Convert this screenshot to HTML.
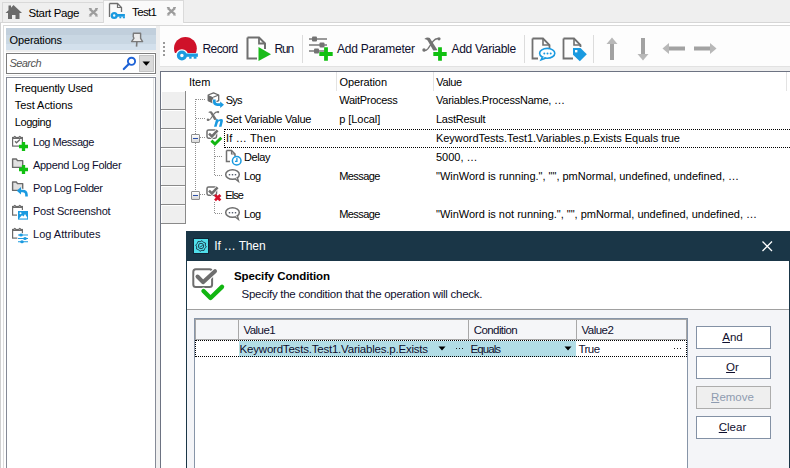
<!DOCTYPE html>
<html><head><meta charset="utf-8">
<style>
*{margin:0;padding:0;box-sizing:border-box}
html,body{width:790px;height:468px;overflow:hidden;background:#efefef;font-family:"Liberation Sans",sans-serif;color:#000;position:relative}
.a{position:absolute}
.t{position:absolute;white-space:nowrap;line-height:1}
svg{position:absolute;overflow:visible}
u{text-decoration:underline;text-underline-offset:1px}
</style></head><body>
<div class="a" style="left:0px;top:0px;width:790px;height:22px;background:#efefef"></div>
<div class="a" style="left:0px;top:22px;width:790px;height:1px;background:#d6d6d6"></div>
<div class="a" style="left:2px;top:2px;width:102px;height:20px;background:#efefef;border:1px solid #d9d9d9;border-bottom:none"></div>
<div class="a" style="left:103px;top:0px;width:81px;height:23px;background:#fafafa;border:1px solid #dadada;border-bottom:none"></div>
<svg style="left:5px;top:4px" width="18" height="16" viewBox="0 0 18 16"><path d="M8.5 1 L17 9 L14.5 9 L14.5 15 L10.5 15 L10.5 11 L7 11 L7 15 L3 15 L3 9 L0.5 9 L3.5 6.2 L3.5 1.5 L6 1.5 L6 3.8 Z" fill="#6b6b6b"/></svg>
<div class="t" style="left:28.5px;top:7.77px;font-size:11.5px;color:#000;letter-spacing:-0.371px;">Start Page</div>
<svg style="left:87.5px;top:6.8px" width="11" height="11" viewBox="0 0 11 11"><path d="M1.8 2.2 L9 8.4 M9 2.2 L1.8 8.4" stroke="#9c9c9c" stroke-width="2.3"/><path d="M0.9 1.6 H3.6 M7.2 1.6 H9.9 M0.9 9 H3.6 M7.2 9 H9.9" stroke="#9c9c9c" stroke-width="1.2"/></svg>
<svg style="left:108px;top:2px" width="18" height="17" viewBox="0 0 18 17"><path d="M1.5 1.5 H9.5 L13.5 5.5 V10" fill="none" stroke="#6f6f6f" stroke-width="1.3"/><path d="M1.5 1.5 V15" fill="none" stroke="#6f6f6f" stroke-width="1.3"/><path d="M9.5 1.5 V5.5 H13.5" fill="none" stroke="#6f6f6f" stroke-width="1.2"/><circle cx="6.2" cy="13.5" r="3.6" fill="#fafafa"/><circle cx="6.2" cy="13.5" r="2.4" fill="none" stroke="#1a9ae0" stroke-width="2.4"/><rect x="8.5" y="12" width="8.4" height="2.7" fill="#1a9ae0"/><rect x="11.4" y="14.5" width="1.9" height="1.8" fill="#1a9ae0"/><rect x="14.8" y="14.5" width="2.1" height="1.8" fill="#1a9ae0"/></svg>
<div class="t" style="left:132px;top:7.27px;font-size:11.5px;color:#000;letter-spacing:-0.622px;">Test1</div>
<svg style="left:166px;top:5.5px" width="11" height="11" viewBox="0 0 11 11"><path d="M1.8 2.2 L9 8.4 M9 2.2 L1.8 8.4" stroke="#9c9c9c" stroke-width="2.3"/><path d="M0.9 1.6 H3.6 M7.2 1.6 H9.9 M0.9 9 H3.6 M7.2 9 H9.9" stroke="#9c9c9c" stroke-width="1.2"/></svg>
<div class="a" style="left:0px;top:23px;width:790px;height:445px;background:#fff;border-left:1px solid #d0d0d0"></div>
<div class="a" style="left:3px;top:25px;width:787px;height:443px;border-left:1px solid #dcdcdc;border-top:1px solid #d8d8d8"></div>
<div class="a" style="left:104px;top:22px;width:79px;height:3px;background:#fafafa"></div>
<div class="a" style="left:6px;top:28px;width:150px;height:22px;background:linear-gradient(#c1cfdc 0,#c1cfdc 7px,#c9d7e3 7px,#c9d7e3 16px,#d3e0ec 16px)"></div>
<div class="a" style="left:6px;top:50px;width:150px;height:2px;background:#eeeeee"></div>
<div class="t" style="left:9.5px;top:34.89px;font-size:11px;color:#000;letter-spacing:-0.134px;">Operations</div>
<svg style="left:126px;top:28.7px" width="24" height="22" viewBox="0 0 24 22"><path d="M7.4 4.3 H14.6 V9.3 L16.6 12.6 H5.6 L7.9 9.3 L7.2 7.6 Z" fill="#ececec" stroke="#7a7a7a" stroke-width="1.4" stroke-linejoin="round"/><path d="M10.9 12.8 L10.5 17.6" stroke="#7a7a7a" stroke-width="1.6"/></svg>
<div class="a" style="left:6px;top:53px;width:150px;height:21px;border:1px solid #7d7d7d;background:#fff"></div>
<div class="t" style="left:9.5px;top:57.59px;font-size:11px;color:#555555;letter-spacing:-0.571px;font-style:italic;">Search</div>
<svg style="left:122px;top:56px" width="14" height="15" viewBox="0 0 14 15"><circle cx="9.5" cy="5.3" r="3.6" fill="none" stroke="#1f63d6" stroke-width="1.9"/><path d="M6.8 8 L1.8 13" stroke="#1f63d6" stroke-width="2.2" stroke-linecap="round"/></svg>
<div class="a" style="left:139px;top:55px;width:15px;height:17px;background:#dadada;border:1px solid #c4c4c4"></div>
<svg style="left:142px;top:61px" width="9" height="5" viewBox="0 0 9 5"><path d="M0.5 0.5 H8 L4.25 4.8 Z" fill="#000"/></svg>
<div class="a" style="left:6px;top:77px;width:150px;height:400px;border:1px solid #858a96;background:#fff"></div>
<div class="a" style="left:153px;top:78px;width:1px;height:52px;background:#e2e2e2"></div>
<div class="a" style="left:6px;top:75px;width:150px;height:1px;background:#ebebeb"></div>
<div class="t" style="left:14.8px;top:83.19px;font-size:11px;color:#000;letter-spacing:-0.193px;">Frequently Used</div>
<div class="t" style="left:14.8px;top:100.19px;font-size:11px;color:#000;letter-spacing:-0.063px;">Test Actions</div>
<div class="t" style="left:14.8px;top:117.19px;font-size:11px;color:#000;letter-spacing:-0.442px;">Logging</div>
<div class="t" style="left:33px;top:137.19px;font-size:11px;color:#0f0f2e;letter-spacing:-0.474px;">Log Message</div>
<div class="t" style="left:33px;top:159.69px;font-size:11px;color:#0f0f2e;letter-spacing:-0.311px;">Append Log Folder</div>
<div class="t" style="left:33px;top:182.69px;font-size:11px;color:#0f0f2e;letter-spacing:-0.401px;">Pop Log Folder</div>
<div class="t" style="left:33px;top:205.69px;font-size:11px;color:#0f0f2e;letter-spacing:-0.222px;">Post Screenshot</div>
<div class="t" style="left:33px;top:228.69px;font-size:11px;color:#0f0f2e;letter-spacing:0.018px;">Log Attributes</div>
<svg style="left:8px;top:132px" width="24" height="24" viewBox="0 0 24 24"><g transform="translate(4,3.5)"><rect x="0.6" y="2" width="9.8" height="8.6" fill="#fff" stroke="#6b6b6b" stroke-width="1.2"/><path d="M0.6 2.6 H10.4" stroke="#6b6b6b" stroke-width="1.8"/><path d="M1.8 2.2 Q2.8 -0.3 3.8 2.2 M6.8 2.2 Q7.8 -0.3 8.8 2.2" fill="#fff" stroke="#6b6b6b" stroke-width="1.2"/></g><path d="M7 9.3 L8.5 10.8 L12 7.5" fill="none" stroke="#6b6b6b" stroke-width="1.3"/><path d="M15.5 10 V19 M11 14.5 H20" stroke="#11c011" stroke-width="3.3"/></svg>
<svg style="left:8px;top:155px" width="24" height="24" viewBox="0 0 24 24"><path d="M4.6 4 H8.3 L9.5 5.6 H14.7 V12.4 H4.6 Z" fill="#e1e1e1" stroke="#6b6b6b" stroke-width="1.4" stroke-linejoin="round"/><path d="M15.5 10 V19 M11 14.5 H20" stroke="#11c011" stroke-width="3.3"/></svg>
<svg style="left:8px;top:178px" width="24" height="24" viewBox="0 0 24 24"><path d="M4.6 4 H8.3 L9.5 5.6 H14.7 V12.4 H4.6 Z" fill="#e1e1e1" stroke="#6b6b6b" stroke-width="1.4" stroke-linejoin="round"/><path d="M12.2 13 H14.5 Q18.5 13 18.5 17 V18.5" fill="none" stroke="#fff" stroke-width="4.4"/><path d="M12.2 13 H14.5 Q18.5 13 18.5 17 V18.5" fill="none" stroke="#1a9ae0" stroke-width="2.6"/><path d="M8.8 12.8 L13 9 V16.6 Z" fill="#1a9ae0"/></svg>
<svg style="left:8px;top:201px" width="24" height="24" viewBox="0 0 24 24"><g transform="translate(4,3.5)"><rect x="0.6" y="2" width="9.8" height="8.6" fill="#fff" stroke="#6b6b6b" stroke-width="1.2"/><path d="M0.6 2.6 H10.4" stroke="#6b6b6b" stroke-width="1.8"/><path d="M1.8 2.2 Q2.8 -0.3 3.8 2.2 M6.8 2.2 Q7.8 -0.3 8.8 2.2" fill="#fff" stroke="#6b6b6b" stroke-width="1.2"/></g><rect x="9" y="9" width="12" height="10.6" fill="#fff"/><rect x="10" y="10" width="10" height="8.6" fill="#1a9ae0"/><path d="M11 17.6 L14 14.2 L15.5 15.5 L17 13 L19.2 16.5 V17.6 Z" fill="#fff"/><circle cx="12.5" cy="12.3" r="1" fill="#fff"/></svg>
<svg style="left:8px;top:224px" width="24" height="24" viewBox="0 0 24 24"><g transform="translate(4,3.5)"><rect x="0.6" y="2" width="9.8" height="8.6" fill="#fff" stroke="#6b6b6b" stroke-width="1.2"/><path d="M0.6 2.6 H10.4" stroke="#6b6b6b" stroke-width="1.8"/><path d="M1.8 2.2 Q2.8 -0.3 3.8 2.2 M6.8 2.2 Q7.8 -0.3 8.8 2.2" fill="#fff" stroke="#6b6b6b" stroke-width="1.2"/></g><rect x="9.3" y="9.2" width="12" height="10" fill="#fff"/><path d="M10 11 H20 M10 14.5 H20 M10 17.7 H20" stroke="#1a9ae0" stroke-width="1.1"/><ellipse cx="13" cy="11" rx="1.8" ry="1.5" fill="#1a9ae0"/><ellipse cx="17" cy="14.5" rx="1.8" ry="1.5" fill="#1a9ae0"/><ellipse cx="14" cy="17.7" rx="1.8" ry="1.5" fill="#1a9ae0"/></svg>
<div class="a" style="left:156px;top:26px;width:4px;height:442px;background:#efefef"></div>
<div class="a" style="left:160px;top:26px;width:630px;height:40px;background:#fdfdfd"></div>
<div class="a" style="left:160px;top:66px;width:630px;height:5px;background:#efefef"></div>
<div class="a" style="left:160px;top:66px;width:630px;height:1px;background:#e2e2e2"></div>
<div class="a" style="left:163px;top:42px;width:2px;height:2px;background:#9a9a9a"></div>
<div class="a" style="left:163px;top:46px;width:2px;height:2px;background:#9a9a9a"></div>
<div class="a" style="left:163px;top:50px;width:2px;height:2px;background:#9a9a9a"></div>
<div class="a" style="left:163px;top:54px;width:2px;height:2px;background:#9a9a9a"></div>
<svg style="left:172px;top:35px" width="28" height="28" viewBox="0 0 28 28"><defs><clipPath id="rc"><rect x="0" y="0" width="28" height="17.9"/></clipPath></defs><circle cx="13.4" cy="13.3" r="11.4" fill="#cf1129" clip-path="url(#rc)"/><circle cx="9.9" cy="20.5" r="6.3" fill="#fdfdfd"/><circle cx="9.9" cy="20.5" r="3.4" fill="none" stroke="#1b9be0" stroke-width="3.3"/><rect x="13" y="18.5" width="12.9" height="3.3" fill="#1b9be0"/><rect x="17.2" y="21.5" width="2.4" height="2.2" fill="#1b9be0"/><rect x="21.7" y="21.5" width="2.8" height="2.2" fill="#1b9be0"/></svg>
<div class="t" style="left:202.5px;top:43.24px;font-size:12px;color:#0f0f2e;letter-spacing:-0.597px;">Record</div>
<svg style="left:245.5px;top:36px" width="28" height="27" viewBox="0 0 28 27"><path d="M1.5 1.5 H13 L19 7.5 V13 M1.5 1.5 V22.5 H11" fill="none" stroke="#6f6f6f" stroke-width="2"/><path d="M13 1.5 V7.5 H19" fill="none" stroke="#6f6f6f" stroke-width="1.8"/><path d="M12.5 11 L25 18.2 L12.5 25 Z" fill="#19bb19"/></svg>
<div class="t" style="left:274.5px;top:43.24px;font-size:12px;color:#0f0f2e;letter-spacing:-1.157px;">Run</div>
<div class="a" style="left:302px;top:35px;width:1px;height:28px;background:#dcdcdc"></div>
<svg style="left:308px;top:34px" width="22" height="24" viewBox="0 0 22 24"><path d="M1 5 H19 M1 11 H19 M1 17 H19" stroke="#7a7a7a" stroke-width="1.5"/><rect x="4" y="2.5" width="5" height="5" rx="1" fill="#737373"/><rect x="11.5" y="8.5" width="5" height="5" rx="1" fill="#737373"/><rect x="6" y="14.5" width="5" height="5" rx="1" fill="#737373"/></svg>
<svg style="left:316px;top:44px" width="20" height="20" viewBox="0 0 20 20"><path d="M10 3.3 V16.7 M3.3 10 H16.7" stroke="#11c011" stroke-width="3.8"/></svg>
<div class="t" style="left:337px;top:43.24px;font-size:12px;color:#0f0f2e;letter-spacing:-0.226px;">Add Parameter</div>
<svg style="left:420px;top:34px" width="25" height="28" viewBox="0 0 25 28"><path d="M4.3 4.9 Q7.2 2.8 9.8 4 L17.6 16.2 L13.3 16.6 L7.6 6.6 Q6.6 5.2 4.3 4.9 Z" fill="#737373"/><path d="M3.5 16.2 Q5.5 17.6 8 14.6 L13 7.4 Q15.5 4.2 18.5 4.6" fill="none" stroke="#737373" stroke-width="1.4"/><circle cx="4" cy="16" r="1.7" fill="#737373"/><circle cx="19" cy="4.8" r="1.6" fill="#737373"/></svg>
<svg style="left:430px;top:44px" width="20" height="20" viewBox="0 0 20 20"><path d="M10 3.3 V16.7 M3.3 10 H16.7" stroke="#11c011" stroke-width="3.8"/></svg>
<div class="t" style="left:451.5px;top:43.24px;font-size:12px;color:#0f0f2e;letter-spacing:-0.293px;">Add Variable</div>
<div class="a" style="left:524px;top:35px;width:1px;height:28px;background:#dcdcdc"></div>
<svg style="left:530.5px;top:36.5px" width="24" height="26" viewBox="0 0 24 26"><path d="M1.5 1.5 H12 L18.5 8 V11 M1.5 1.5 V21.5 H7" fill="none" stroke="#707070" stroke-width="1.8"/><path d="M12 1.5 V8 H18.5" fill="none" stroke="#707070" stroke-width="1.6"/><ellipse cx="16.2" cy="16.3" rx="7.6" ry="4.9" fill="#fff" stroke="#1a9ae0" stroke-width="1.6"/><path d="M11.5 20.2 L10 23 L15 21" fill="#fff" stroke="#1a9ae0" stroke-width="1.4"/><circle cx="13.3" cy="16.5" r="1" fill="#1a9ae0"/><circle cx="16.5" cy="16.5" r="1" fill="#1a9ae0"/><circle cx="19.7" cy="16.5" r="1" fill="#1a9ae0"/></svg>
<svg style="left:561.5px;top:36.5px" width="26" height="26" viewBox="0 0 26 26"><path d="M1.5 1.5 H12 L18.5 8 V10 M1.5 1.5 V21.5 H11" fill="none" stroke="#707070" stroke-width="1.8"/><path d="M12 1.5 V8 H18.5" fill="none" stroke="#707070" stroke-width="1.6"/><path d="M11 11 H18.5 L24.8 17.3 L17.8 24.3 L11 17.8 Z" fill="#1a9ae0"/><rect x="13" y="13" width="2.4" height="2.4" fill="#fff"/></svg>
<div class="a" style="left:593px;top:35px;width:1px;height:28px;background:#dcdcdc"></div>
<svg style="left:605px;top:37px" width="14" height="24" viewBox="0 0 14 24"><path d="M7 0.5 L12.5 7 H1.5 Z" fill="#b8b8b8"/><rect x="5" y="7" width="4" height="16" fill="#a2a2a2"/></svg>
<svg style="left:636px;top:37px" width="14" height="24" viewBox="0 0 14 24"><rect x="5" y="1" width="4" height="16" fill="#a2a2a2"/><path d="M7 23.5 L12.5 17 H1.5 Z" fill="#b8b8b8"/></svg>
<svg style="left:662px;top:42px" width="24" height="13" viewBox="0 0 24 13"><path d="M0.5 6.5 L7 1 V12 Z" fill="#b8b8b8"/><rect x="7" y="4.5" width="16" height="4" fill="#a2a2a2"/></svg>
<svg style="left:693px;top:42px" width="24" height="13" viewBox="0 0 24 13"><rect x="1" y="4.5" width="16" height="4" fill="#a2a2a2"/><path d="M23.5 6.5 L17 1 V12 Z" fill="#b8b8b8"/></svg>
<div class="a" style="left:160px;top:71px;width:630px;height:397px;border-left:1px solid #6d7382;border-top:1px solid #6d7382;background:#fff"></div>
<div class="a" style="left:336px;top:72px;width:1px;height:19px;background:#e3e3e3"></div>
<div class="a" style="left:433px;top:72px;width:1px;height:19px;background:#e3e3e3"></div>
<div class="a" style="left:786px;top:72px;width:1px;height:19px;background:#e3e3e3"></div>
<div class="t" style="left:189px;top:76.99px;font-size:11px;color:#000;letter-spacing:0.002px;">Item</div>
<div class="t" style="left:339.5px;top:76.99px;font-size:11px;color:#000;letter-spacing:-0.101px;">Operation</div>
<div class="t" style="left:436.3px;top:76.99px;font-size:11px;color:#000;letter-spacing:-0.404px;">Value</div>
<div class="a" style="left:185px;top:91px;width:1px;height:133px;background:#8a8a8a"></div>
<div class="a" style="left:162px;top:92px;width:23px;height:17px;background:#efefef"></div>
<div class="a" style="left:161px;top:109px;width:24px;height:1px;background:#8a8a8a"></div>
<div class="a" style="left:162px;top:111px;width:23px;height:17px;background:#efefef"></div>
<div class="a" style="left:161px;top:128px;width:24px;height:1px;background:#8a8a8a"></div>
<div class="a" style="left:162px;top:130px;width:23px;height:17px;background:#efefef"></div>
<div class="a" style="left:161px;top:147px;width:24px;height:1px;background:#8a8a8a"></div>
<div class="a" style="left:162px;top:149px;width:23px;height:17px;background:#efefef"></div>
<div class="a" style="left:161px;top:166px;width:24px;height:1px;background:#8a8a8a"></div>
<div class="a" style="left:162px;top:168px;width:23px;height:17px;background:#efefef"></div>
<div class="a" style="left:161px;top:185px;width:24px;height:1px;background:#8a8a8a"></div>
<div class="a" style="left:162px;top:187px;width:23px;height:17px;background:#efefef"></div>
<div class="a" style="left:161px;top:204px;width:24px;height:1px;background:#8a8a8a"></div>
<div class="a" style="left:162px;top:206px;width:23px;height:17px;background:#efefef"></div>
<div class="a" style="left:161px;top:223px;width:24px;height:1px;background:#8a8a8a"></div>
<div class="t" style="left:225.7px;top:94.89px;font-size:11px;color:#000;letter-spacing:-0.819px;">Sys</div>
<div class="t" style="left:339.3px;top:94.89px;font-size:11px;color:#000;letter-spacing:-0.283px;">WaitProcess</div>
<div class="t" style="left:436px;top:94.89px;font-size:11px;color:#000;letter-spacing:-0.230px;">Variables.ProcessName, …</div>
<div class="t" style="left:225.7px;top:113.89px;font-size:11px;color:#000;letter-spacing:-0.217px;">Set Variable Value</div>
<div class="t" style="left:339.3px;top:113.89px;font-size:11px;color:#000;letter-spacing:-0.073px;">p [Local]</div>
<div class="t" style="left:436px;top:113.89px;font-size:11px;color:#000;letter-spacing:-0.263px;">LastResult</div>
<div class="t" style="left:226px;top:132.89px;font-size:11px;color:#000;letter-spacing:0.188px;">If … Then</div>
<div class="t" style="left:436px;top:132.89px;font-size:11px;color:#000;letter-spacing:-0.046px;">KeywordTests.Test1.Variables.p.Exists Equals true</div>
<div class="t" style="left:244px;top:151.89px;font-size:11px;color:#000;letter-spacing:-0.406px;">Delay</div>
<div class="t" style="left:436px;top:151.89px;font-size:11px;color:#000;letter-spacing:-0.014px;">5000, …</div>
<div class="t" style="left:244px;top:170.89px;font-size:11px;color:#000;letter-spacing:-0.677px;">Log</div>
<div class="t" style="left:339.3px;top:170.89px;font-size:11px;color:#000;letter-spacing:-0.606px;">Message</div>
<div class="t" style="left:436px;top:170.89px;font-size:11px;color:#000;letter-spacing:-0.007px;">&quot;WinWord is running.&quot;, &quot;&quot;, pmNormal, undefined, undefined, …</div>
<div class="t" style="left:225.3px;top:189.89px;font-size:11px;color:#000;letter-spacing:-0.966px;">Else</div>
<div class="t" style="left:244px;top:208.89px;font-size:11px;color:#000;letter-spacing:-0.677px;">Log</div>
<div class="t" style="left:339.3px;top:208.89px;font-size:11px;color:#000;letter-spacing:-0.606px;">Message</div>
<div class="t" style="left:436px;top:208.89px;font-size:11px;color:#000;letter-spacing:-0.012px;">&quot;WinWord is not running.&quot;, &quot;&quot;, pmNormal, undefined, undefined, …</div>
<div class="a" style="left:224px;top:129px;width:570px;height:19px;border:1px dotted #000"></div>
<div class="a" style="left:195px;top:99px;width:1px;height:35px;background:repeating-linear-gradient(#8f8f8f 0 1px,transparent 1px 2px)"></div>
<div class="a" style="left:196px;top:99px;width:9px;height:1px;background:repeating-linear-gradient(90deg,#8f8f8f 0 1px,transparent 1px 2px)"></div>
<div class="a" style="left:196px;top:118px;width:9px;height:1px;background:repeating-linear-gradient(90deg,#8f8f8f 0 1px,transparent 1px 2px)"></div>
<div class="a" style="left:200px;top:137px;width:5px;height:1px;background:repeating-linear-gradient(90deg,#8f8f8f 0 1px,transparent 1px 2px)"></div>
<div class="a" style="left:195px;top:143px;width:1px;height:48px;background:repeating-linear-gradient(#8f8f8f 0 1px,transparent 1px 2px)"></div>
<div class="a" style="left:200px;top:194px;width:5px;height:1px;background:repeating-linear-gradient(90deg,#8f8f8f 0 1px,transparent 1px 2px)"></div>
<div class="a" style="left:214px;top:146px;width:1px;height:30px;background:repeating-linear-gradient(#8f8f8f 0 1px,transparent 1px 2px)"></div>
<div class="a" style="left:215px;top:156px;width:8px;height:1px;background:repeating-linear-gradient(90deg,#8f8f8f 0 1px,transparent 1px 2px)"></div>
<div class="a" style="left:215px;top:175px;width:8px;height:1px;background:repeating-linear-gradient(90deg,#8f8f8f 0 1px,transparent 1px 2px)"></div>
<div class="a" style="left:214px;top:202px;width:1px;height:12px;background:repeating-linear-gradient(#8f8f8f 0 1px,transparent 1px 2px)"></div>
<div class="a" style="left:215px;top:213px;width:8px;height:1px;background:repeating-linear-gradient(90deg,#8f8f8f 0 1px,transparent 1px 2px)"></div>
<div class="a" style="left:191px;top:134px;width:9px;height:9px;border:1px solid #8e8f8f;border-radius:1px;background:linear-gradient(#ffffff,#d8d8d8)"></div>
<div class="a" style="left:193px;top:138px;width:5px;height:1px;background:#2a4fa8"></div>
<div class="a" style="left:191px;top:191px;width:9px;height:9px;border:1px solid #8e8f8f;border-radius:1px;background:linear-gradient(#ffffff,#d8d8d8)"></div>
<div class="a" style="left:193px;top:195px;width:5px;height:1px;background:#2a4fa8"></div>
<svg style="left:204px;top:90px" width="24" height="24" viewBox="0 0 24 24"><path d="M4.2 5 L9.5 2.9 L14.7 5 V10.6 L9.2 12.8 L4.2 10.6 Z" fill="#fff" stroke="#6a6a6a" stroke-width="1.3" stroke-linejoin="round"/><path d="M4.2 5 L9.2 7.2 V12.8 L4.2 10.6 Z" fill="#6a6a6a"/><path d="M9.2 7.2 L14.7 5" stroke="#6a6a6a" stroke-width="1.1"/><path d="M10.3 9.6 V11.6 Q10.3 14.6 13.3 14.6 H16.8" fill="none" stroke="#fff" stroke-width="4.2"/><path d="M10.3 9.6 V11.6 Q10.3 14.6 13.3 14.6 H16.8" fill="none" stroke="#1a9ae0" stroke-width="2.7"/><path d="M16.2 11.6 L20 14.7 L16.2 17.9 Z" fill="#1a9ae0"/></svg>
<svg style="left:204px;top:109px" width="24" height="24" viewBox="0 0 24 24"><g transform="translate(1.2,-0.2) scale(0.68)"><path d="M4.3 4.9 Q7.2 2.8 9.8 4 L17.6 16.2 L13.3 16.6 L7.6 6.6 Q6.6 5.2 4.3 4.9 Z" fill="#737373"/><path d="M3.5 16.2 Q5.5 17.6 8 14.6 L13 7.4 Q15.5 4.2 18.5 4.6" fill="none" stroke="#737373" stroke-width="1.6"/><circle cx="4" cy="16" r="1.8" fill="#737373"/><circle cx="19" cy="4.8" r="1.7" fill="#737373"/></g><path d="M10 17.7 L12.1 10.3 H14.5 L14.2 11.5 Q15.6 10.1 17.4 10.1 Q19.4 10.2 18.9 12.3 L17.5 17.7 H15 L16.2 12.9 Q16.4 12 15.7 12.1 Q14.4 12.2 13.7 14 L12.6 17.7 Z" fill="#1a9ae0"/></svg>
<svg style="left:204px;top:126px" width="24" height="24" viewBox="0 0 24 24"><g transform="translate(0,0)"><rect x="3" y="4" width="9.5" height="8.2" rx="1.6" fill="#fff" stroke="#6e6e6e" stroke-width="1.5"/><path d="M5 7.6 L7.9 10.4 L13.6 4.4" fill="none" stroke="#fff" stroke-width="4"/><path d="M5 7.6 L7.9 10.4 L13.6 4.4" fill="none" stroke="#707070" stroke-width="2.6"/></g><path d="M7.4 14.6 L11 18 L17.3 11.8" fill="none" stroke="#11b511" stroke-width="2.9"/></svg>
<svg style="left:224px;top:148px" width="18" height="18" viewBox="0 0 18 18"><path d="M2.5 2.5 H7.5 L11 6 V8 M2.5 2.5 V13.5 H6" fill="none" stroke="#707070" stroke-width="1.5"/><path d="M7.5 2.5 V6 H11" fill="none" stroke="#707070" stroke-width="1.2"/><circle cx="12.7" cy="12.7" r="4.3" fill="#fff" stroke="#1a9ae0" stroke-width="1.5"/><path d="M12.9 10 V13.4 H11" fill="none" stroke="#1a9ae0" stroke-width="1.3"/></svg>
<svg style="left:225px;top:169px" width="17" height="15" viewBox="0 0 17 15"><ellipse cx="7.5" cy="5.5" rx="6.8" ry="4.8" fill="#fff" stroke="#6f6f6f" stroke-width="1.5"/><path d="M10 9.8 L13.5 12.5 L12.5 9" fill="#fff" stroke="#6f6f6f" stroke-width="1.3"/><rect x="3.8" y="5" width="1.4" height="1.4" fill="#565e6e"/><rect x="6.8" y="5" width="1.4" height="1.4" fill="#565e6e"/><rect x="9.8" y="5" width="1.4" height="1.4" fill="#565e6e"/></svg>
<svg style="left:225px;top:207px" width="17" height="15" viewBox="0 0 17 15"><ellipse cx="7.5" cy="5.5" rx="6.8" ry="4.8" fill="#fff" stroke="#6f6f6f" stroke-width="1.5"/><path d="M10 9.8 L13.5 12.5 L12.5 9" fill="#fff" stroke="#6f6f6f" stroke-width="1.3"/><rect x="3.8" y="5" width="1.4" height="1.4" fill="#565e6e"/><rect x="6.8" y="5" width="1.4" height="1.4" fill="#565e6e"/><rect x="9.8" y="5" width="1.4" height="1.4" fill="#565e6e"/></svg>
<svg style="left:204px;top:183px" width="24" height="24" viewBox="0 0 24 24"><g transform="translate(0,0)"><rect x="3" y="4" width="9.5" height="8.2" rx="1.6" fill="#fff" stroke="#6e6e6e" stroke-width="1.5"/><path d="M5 7.6 L7.9 10.4 L13.6 4.4" fill="none" stroke="#fff" stroke-width="4"/><path d="M5 7.6 L7.9 10.4 L13.6 4.4" fill="none" stroke="#707070" stroke-width="2.6"/></g><path d="M11 12 L16.4 17.4 M16.4 12 L11 17.4" stroke="#d8112b" stroke-width="2.7"/></svg>
<div class="a" style="left:186px;top:231px;width:604px;height:237px;background:#1a3647"></div>
<div class="a" style="left:187px;top:261px;width:602px;height:48px;background:#fff"></div>
<div class="a" style="left:187px;top:309px;width:602px;height:1px;background:#a0a0a0"></div>
<div class="a" style="left:187px;top:310px;width:602px;height:158px;background:#f4f5f8"></div>
<div class="a" style="left:193px;top:238px;width:16px;height:16px;background:#0f2535"></div>
<div class="a" style="left:194px;top:239px;width:14px;height:14px;background:#50dfea"></div>
<svg style="left:194px;top:239px" width="14" height="14" viewBox="0 0 14 14"><polygon points="12.30,8.05 10.66,9.44 10.00,11.49 7.86,11.32 5.95,12.30 4.56,10.66 2.51,10.00 2.68,7.86 1.70,5.95 3.34,4.56 4.00,2.51 6.14,2.68 8.05,1.70 9.44,3.34 11.49,4.00 11.32,6.14" fill="none" stroke="#1a3647" stroke-width="0.9"/><circle cx="7" cy="7" r="2.7" fill="none" stroke="#1a3647" stroke-width="0.9"/><path d="M5.6 7.1 L6.7 8 L8.6 6" fill="none" stroke="#1a3647" stroke-width="0.9"/></svg>
<div class="t" style="left:214.2px;top:240.34px;font-size:12px;color:#ffffff;letter-spacing:-0.134px;">If … Then</div>
<svg style="left:762px;top:241px" width="11" height="11" viewBox="0 0 11 11"><path d="M0.5 0.5 L10 10 M10 0.5 L0.5 10" stroke="#fff" stroke-width="1.3"/></svg>
<svg style="left:190px;top:266px" width="36" height="36" viewBox="0 0 36 36"><rect x="3.3" y="3.3" width="18.8" height="17.8" rx="2.5" fill="#fff" stroke="#6e6e6e" stroke-width="2"/><path d="M7.5 10.5 L13 16.2 L25 5.2" fill="none" stroke="#fff" stroke-width="6" stroke-linecap="round" stroke-linejoin="round"/><path d="M7.5 10.5 L13 16.2 L25 5.2" fill="none" stroke="#6e6e6e" stroke-width="4" stroke-linecap="round" stroke-linejoin="round"/><path d="M13.5 25 L20.5 32 L32 20.8" fill="none" stroke="#fff" stroke-width="6.5" stroke-linecap="round" stroke-linejoin="round"/><path d="M13.5 25 L20.5 32 L32 20.8" fill="none" stroke="#11b511" stroke-width="4.4" stroke-linecap="round" stroke-linejoin="round"/></svg>
<div class="t" style="left:234px;top:270.57px;font-size:11.5px;color:#000;letter-spacing:-0.109px;font-weight:bold;">Specify Condition</div>
<div class="t" style="left:241.5px;top:288.77px;font-size:11.5px;color:#0f0f2e;letter-spacing:-0.263px;">Specify the condition that the operation will check.</div>
<div class="a" style="left:194px;top:318px;width:494px;height:160px;border:1px solid #8795a8;background:#fff"></div>
<div class="a" style="left:195px;top:319px;width:492px;height:21px;background:#f5f6f8"></div>
<div class="a" style="left:195px;top:319px;width:492px;height:1px;background:#a6a6a6"></div>
<div class="a" style="left:195px;top:319px;width:1px;height:21px;background:#a6a6a6"></div>
<div class="a" style="left:686px;top:319px;width:1px;height:21px;background:#a6a6a6"></div>
<div class="a" style="left:238px;top:319px;width:1px;height:21px;background:#a8a8a8"></div>
<div class="a" style="left:468px;top:319px;width:1px;height:21px;background:#a8a8a8"></div>
<div class="a" style="left:576px;top:319px;width:1px;height:21px;background:#a8a8a8"></div>
<div class="a" style="left:195px;top:339px;width:492px;height:1px;background:#a8a8a8"></div>
<div class="t" style="left:243.6px;top:324.57px;font-size:11.5px;color:#0f0f2e;letter-spacing:-0.591px;">Value1</div>
<div class="t" style="left:473.7px;top:324.57px;font-size:11.5px;color:#0f0f2e;letter-spacing:-0.574px;">Condition</div>
<div class="t" style="left:581.5px;top:324.57px;font-size:11.5px;color:#0f0f2e;letter-spacing:-0.511px;">Value2</div>
<div class="a" style="left:239px;top:341px;width:337px;height:16px;background:#b2dde6"></div>
<div class="a" style="left:195px;top:340px;width:492px;height:17px;border:1px dotted #000"></div>
<div class="t" style="left:239.6px;top:344.07px;font-size:11.5px;color:#0f0f2e;letter-spacing:-0.209px;">KeywordTests.Test1.Variables.p.Exists</div>
<svg style="left:438px;top:346px" width="8" height="5" viewBox="0 0 8 5"><path d="M0.5 0.5 H7.5 L4 4.5 Z" fill="#000"/></svg>
<div class="a" style="left:456px;top:348px;width:1px;height:1px;background:#222"></div>
<div class="a" style="left:459px;top:348px;width:1px;height:1px;background:#222"></div>
<div class="a" style="left:462px;top:348px;width:1px;height:1px;background:#222"></div>
<div class="t" style="left:470.6px;top:344.07px;font-size:11.5px;color:#0f0f2e;letter-spacing:-0.953px;">Equals</div>
<svg style="left:564px;top:346px" width="8" height="5" viewBox="0 0 8 5"><path d="M0.5 0.5 H7.5 L4 4.5 Z" fill="#000"/></svg>
<div class="t" style="left:578.5px;top:344.07px;font-size:11.5px;color:#0f0f2e;letter-spacing:-0.540px;">True</div>
<div class="a" style="left:674px;top:348px;width:1px;height:1px;background:#222"></div>
<div class="a" style="left:677px;top:348px;width:1px;height:1px;background:#222"></div>
<div class="a" style="left:680px;top:348px;width:1px;height:1px;background:#222"></div>
<div class="a" style="left:696px;top:326px;width:75px;height:23px;background:#fff;border:1px solid #8391a5"></div>
<div class="t" style="left:695px;width:75px;text-align:center;top:332.47px;font-size:11.5px;color:#0f0f2e"><u>A</u>nd</div>
<div class="a" style="left:696px;top:356px;width:75px;height:23px;background:#fff;border:1px solid #8391a5"></div>
<div class="t" style="left:695px;width:75px;text-align:center;top:362.47px;font-size:11.5px;color:#0f0f2e"><u>O</u>r</div>
<div class="a" style="left:696px;top:386px;width:75px;height:23px;background:#efefef;border:1px solid #adadad"></div>
<div class="t" style="left:695px;width:75px;text-align:center;top:392.47px;font-size:11.5px;color:#8e9bb0"><u>R</u>emove</div>
<div class="a" style="left:696px;top:416px;width:75px;height:23px;background:#fff;border:1px solid #8391a5"></div>
<div class="t" style="left:695px;width:75px;text-align:center;top:422.47px;font-size:11.5px;color:#0f0f2e"><u>C</u>lear</div>
</body></html>
